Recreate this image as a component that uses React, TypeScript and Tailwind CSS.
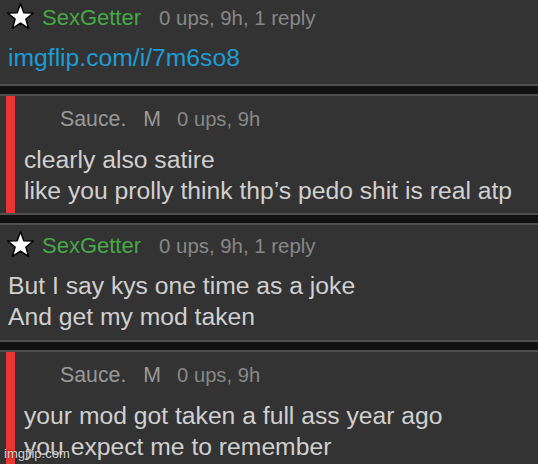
const font = { fontFamily: '"Liberation Sans", Arial, sans-serif' };

const Star = () => (
  <svg width="27" height="27" viewBox="0 0 26 26" className="shrink-0 -mt-[3px]">
    <polygon
      points="13,0.8 16.2,9.4 25.3,9.7 18.2,15.4 20.7,24.5 13,19.3 5.3,24.5 7.8,15.4 0.7,9.7 9.8,9.4"
      fill="#ffffff"
      stroke="#000000"
      strokeWidth="1.4"
      strokeLinejoin="round"
    />
  </svg>
);

const TopComment = ({ lines, link, first }: { lines: string[]; link?: boolean; first?: boolean }) => (
  <div
    className={`bg-[#333333] border-b-2 border-[#505050] ${
      first ? "pt-[6px] pb-[11px]" : "border-t-2 pt-[9px] pb-[8px]"
    }`}
  >
    <div className="flex items-center h-[24px] pl-[7px]">
      <Star />
      <div className="flex items-baseline">
        <span className="ml-[8px] text-[22px] leading-[24px] text-[#46a846]">SexGetter</span>
        <span className="ml-[18px] text-[20.4px] leading-[24px] text-[#888888]">0 ups, 9h, 1 reply</span>
      </div>
    </div>
    <div className="mt-[12px] pl-[8px] text-[24.7px] leading-[31px] whitespace-nowrap">
      {lines.map((l, i) => (
        <div key={i} className={link ? "text-[#1e9cd6]" : "text-[#d0d0d0]"}>
          {l}
        </div>
      ))}
    </div>
  </div>
);

const Reply = ({ lines }: { lines: string[] }) => (
  <div className="bg-[#333333] border-y-2 border-[#505050] flex">
    <div className="ml-[6px] w-[9px] bg-[#ec3434] shrink-0" />
    <div className="pt-[11px] pb-[7px] pl-[9px]">
      <div className="flex items-baseline h-[24px] pl-[36px] leading-[24px]">
        <span className="text-[21.3px] text-[#9a9a9a]">Sauce.</span>
        <span className="ml-[17px] text-[21.3px] text-[#9a9a9a]">M</span>
        <span className="ml-[16px] text-[20.2px] text-[#888888]">0 ups, 9h</span>
      </div>
      <div className="mt-[13px] text-[24.7px] leading-[31px] text-[#d0d0d0] whitespace-nowrap">
        {lines.map((l, i) => (
          <div key={i}>{l}</div>
        ))}
      </div>
    </div>
  </div>
);

export default function App() {
  return (
    <div className="relative w-[538px] h-[464px] overflow-hidden bg-[#111111]" style={font}>
      <div className="flex flex-col gap-[8px]">
        <TopComment first link lines={["imgflip.com/i/7m6so8"]} />
        <Reply lines={["clearly also satire", "like you prolly think thp’s pedo shit is real atp"]} />
        <TopComment lines={["But I say kys one time as a joke", "And get my mod taken"]} />
        <Reply lines={["your mod got taken a full ass year ago", "you expect me to remember"]} />
      </div>
      <div className="absolute left-[4px] bottom-[2px] text-[13px] leading-[16px] text-white/80 [text-shadow:0_0_2px_rgba(0,0,0,0.8)]">
        imgflip.com
      </div>
    </div>
  );
}
